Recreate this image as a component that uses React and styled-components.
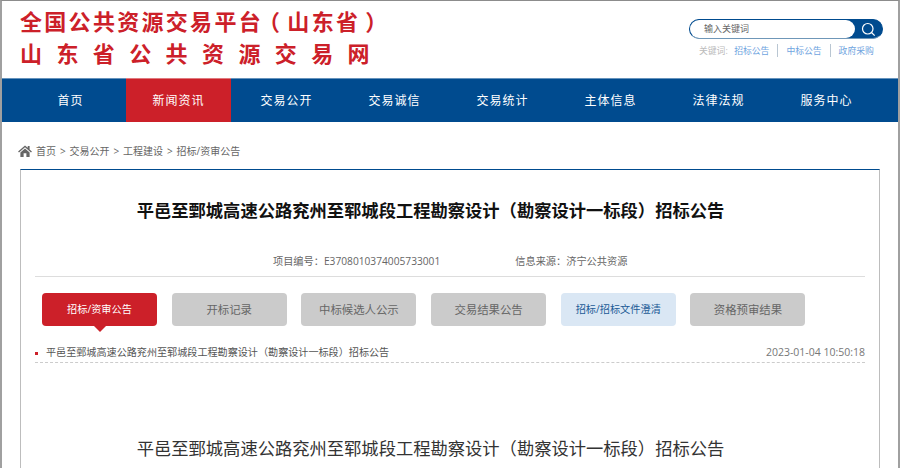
import React from "react";
import styled, { createGlobalStyle } from "styled-components";

const GlobalStyle = createGlobalStyle`
  html, body {
    margin: 0;
    padding: 0;
    background: #fff;
  }
  body {
    font-family: "Open Sans", "Noto Sans CJK SC", sans-serif;
  }
`;

const NAV_ITEMS = ["首页", "新闻资讯", "交易公开", "交易诚信", "交易统计", "主体信息", "法律法规", "服务中心"];
const TABS = [
  { label: "招标/资审公告", kind: "active" },
  { label: "开标记录" },
  { label: "中标候选人公示" },
  { label: "交易结果公告" },
  { label: "招标/招标文件澄清", kind: "light" },
  { label: "资格预审结果" },
];
const TITLE = "平邑至鄄城高速公路兖州至郓城段工程勘察设计（勘察设计一标段）招标公告";

function App() {
  return (
    <Page>
      <GlobalStyle />
      <Header>
        <Logo>
          <LogoLine>
            全国公共资源交易平<TightChar>台</TightChar>
            <OpenParen>（</OpenParen>山东省<CloseParen>）</CloseParen>
          </LogoLine>
          <LogoLine $wide>山东省公共资源交易网</LogoLine>
        </Logo>
        <SearchArea>
          <SearchBox>
            <SearchInput>输入关键词</SearchInput>
            <SearchButton>
              <svg width="15" height="15" viewBox="0 0 16 16" fill="none" stroke="#fff" strokeWidth="1.3">
                <circle cx="7.2" cy="7.2" r="5.6" />
                <path d="M11.2 11.2l3.4 3.4" />
              </svg>
            </SearchButton>
          </SearchBox>
          <Keywords>
            <KeywordLabel>关键词:</KeywordLabel>
            <Keyword>招标公告</Keyword>
            <Keyword>中标公告</Keyword>
            <Keyword $last>政府采购</Keyword>
          </Keywords>
        </SearchArea>
      </Header>
      <Nav>
        {NAV_ITEMS.map((item, i) => (
          <NavItem key={item} $active={i === 1}>{item}</NavItem>
        ))}
      </Nav>
      <Crumbs>
        <svg width="14" height="12" viewBox="0 0 15 13" fill="#666">
          <path d="M7.5 0.500L0 7l1 1 6.500-5.500L14 8l1-1-2.500-2.200V1h-2v2L7.500.5z" />
          <path d="M2.500 8l5-4.200 5 4.200v5H9V9H6v4H2.500z" />
        </svg>
        <CrumbText>首页 &gt; 交易公开 &gt; 工程建设 &gt; 招标/资审公告</CrumbText>
      </Crumbs>
      <Card>
        <Title>{TITLE}</Title>
        <Meta>
          <span>项目编号：E3708010374005733001</span>
          <span>信息来源：济宁公共资源</span>
        </Meta>
        <Tabs>
          {TABS.map((tab) => (
            <Tab key={tab.label} $kind={tab.kind}>{tab.label}</Tab>
          ))}
        </Tabs>
        <NoticeRow>
          <NoticeName>{TITLE}</NoticeName>
          <NoticeDate>2023-01-04 10:50:18</NoticeDate>
        </NoticeRow>
        <BodyTitle>{TITLE}</BodyTitle>
      </Card>
    </Page>
  );
}

const Page = styled.div`
  width: 900px;
  height: 468px;
  box-sizing: border-box;
  overflow: hidden;
  border-top: 1px solid #8c8c8c;
  border-left: 2px solid #a0a0a0;
  border-right: 2px solid #a0a0a0;
  background: #fff;
`;

const Header = styled.div`
  height: 77px;
  display: flex;
  justify-content: space-between;
`;

const Logo = styled.div`
  padding: 4px 0 0 18px;
`;

const LogoLine = styled.div`
  height: 32px;
  line-height: 32px;
  font-size: 22px;
  font-weight: 700;
  color: #cc2029;
  white-space: nowrap;
  letter-spacing: ${(p) => (p.$wide ? "14.400px" : "2.300px")};
`;

/* the brackets sit further from 山东省 than this font draws them */
const TightChar = styled.span`
  letter-spacing: -2.700px;
`;

const OpenParen = styled.span`
  margin-right: 5px;
`;

const CloseParen = styled.span`
  margin-left: 5px;
`;

const SearchArea = styled.div`
  width: 209px;
  padding-top: 18px;
  box-sizing: border-box;
`;

const SearchBox = styled.div`
  width: 194px;
  height: 20px;
  box-sizing: border-box;
  border: 1px solid #004b8f;
  border-bottom-color: #6f97b8;
  border-radius: 10px;
  background: #004b8f;
  display: flex;
`;

const SearchInput = styled.div`
  flex: 1;
  background: #fff;
  border-radius: 9px;
  padding-left: 14px;
  font-size: 9px;
  line-height: 18px;
  color: #666;
`;

const SearchButton = styled.div`
  width: 27px;
  display: flex;
  align-items: center;
  justify-content: center;
`;

const Keywords = styled.div`
  display: flex;
  align-items: center;
  margin: 5px 0 0 10px;
  font-size: 8.800px;
  white-space: nowrap;
`;

const KeywordLabel = styled.span`
  color: #bbb;
  margin-right: 6.500px;
`;

const Keyword = styled.span`
  color: #6fa4e0;
  padding-right: 8px;
  margin-right: 8px;
  border-right: ${(p) => (p.$last ? "none" : "1px solid #b9c6d2")};
`;

const Nav = styled.div`
  height: 44px;
  box-sizing: border-box;
  background: #004b8f;
  box-shadow: inset 0 1px 0 rgba(255, 255, 255, 0.4);
  display: flex;
  gap: 3px;
  padding-left: 16px;
`;

const NavItem = styled.div`
  width: 105px;
  box-sizing: border-box;
  padding-top: 1px;
  text-align: center;
  font-size: 12px;
  letter-spacing: 1px;
  line-height: 43px;
  color: #fff;
  background: ${(p) => (p.$active ? "#cc2029" : "transparent")};
  box-shadow: ${(p) => (p.$active ? "inset 0 1px 0 rgba(255, 255, 255, 0.4)" : "none")};
`;

const Crumbs = styled.div`
  height: 47px;
  padding: 10px 0 0 16px;
  display: flex;
  align-items: center;
  gap: 4px;
  box-sizing: border-box;
`;

const CrumbText = styled.span`
  font-size: 10px;
  word-spacing: 1.300px;
  color: #666;
`;

const Card = styled.div`
  margin: 0 18px;
  height: 400px;
  box-sizing: border-box;
  border: 1px solid #bdbdbd;
  border-top: 1px solid #004b8f;
  padding: 0 14px;
`;

const Title = styled.div`
  margin-top: 29px;
  padding-right: 39px;
  text-align: center;
  font-size: 17.300px;
  line-height: 24px;
  font-weight: 700;
  color: #111;
  white-space: nowrap;
`;

const Meta = styled.div`
  margin-top: 31px;
  height: 22px;
  border-bottom: 1px solid #ddd;
  display: flex;
  gap: 75px;
  padding-left: 238px;
  font-size: 10.200px;
  line-height: 15px;
  color: #666;
`;

const Tabs = styled.div`
  margin-top: 16px;
  padding-left: 7px;
  display: flex;
  gap: 14.700px;
`;

const Tab = styled.div`
  position: relative;
  width: 115px;
  height: 33px;
  border-radius: 4px;
  text-align: center;
  font-size: ${(p) => (p.$kind ? "10.200px" : "11.400px")};
  line-height: 33px;
  background: ${(p) => (p.$kind === "active" ? "#cc2029" : p.$kind === "light" ? "#dae7f4" : "#cbcbcb")};
  color: ${(p) => (p.$kind === "active" ? "#fff" : p.$kind === "light" ? "#1a5a96" : "#666")};
  ${(p) =>
    p.$kind === "active" &&
    `&::after {
      content: "";
      position: absolute;
      left: 50%;
      bottom: -6px;
      margin-left: -6px;
      border-left: 6px solid transparent;
      border-right: 6px solid transparent;
      border-top: 6px solid #cc2029;
    }`}
`;

const NoticeRow = styled.div`
  margin-top: 17px;
  height: 17px;
  padding-bottom: 2px;
  display: flex;
  justify-content: space-between;
  align-items: center;
  border-bottom: 1px dashed #ccc;
  font-size: 10.100px;
  line-height: 18px;
  color: #555;
`;

const NoticeName = styled.div`
  padding-left: 11px;
  position: relative;
  white-space: nowrap;
  &::before {
    content: "";
    position: absolute;
    left: 0;
    top: 9px;
    width: 3px;
    height: 3px;
    background: #cc2029;
  }
`;

const NoticeDate = styled.div`
  font-size: 10.500px;
  color: #777;
`;

const BodyTitle = styled.div`
  margin-top: 74px;
  padding-right: 39px;
  text-align: center;
  font-size: 17.300px;
  line-height: 24px;
  color: #333;
  white-space: nowrap;
`;

export default App;
